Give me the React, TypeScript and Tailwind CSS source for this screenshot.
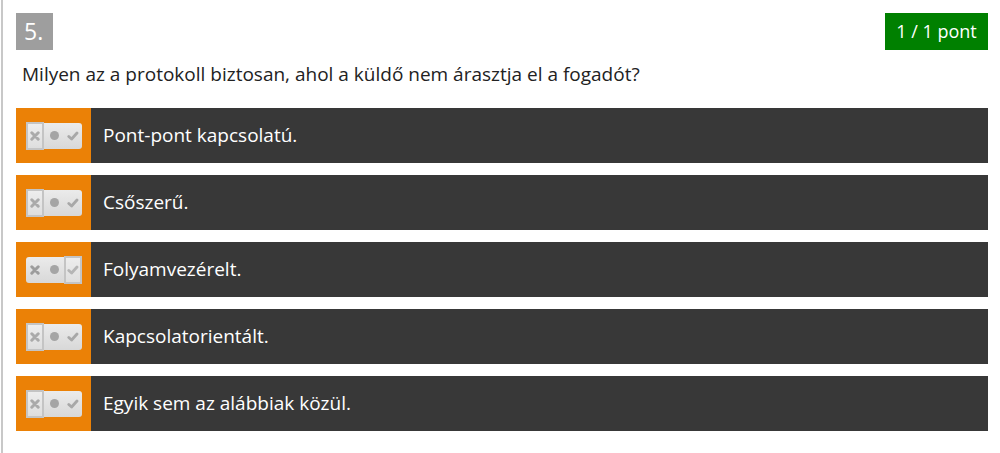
import React from "react";

type Answer = { text: string; state: "no" | "yes" };

const answers: Answer[] = [
  { text: "Pont-pont kapcsolatú.", state: "no" },
  { text: "Csőszerű.", state: "no" },
  { text: "Folyamvezérelt.", state: "yes" },
  { text: "Kapcsolatorientált.", state: "no" },
  { text: "Egyik sem az alábbiak közül.", state: "no" },
];

function Toggle({ state }: { state: "no" | "yes" }) {
  return (
    <div className="relative flex items-center w-[56px] h-[26px] rounded-[3px] bg-gradient-to-b from-[#ebebeb] to-[#d8d8d8]">
      {/* cross */}
      <div className="w-[18px] flex justify-center">
        <svg width="10" height="10" viewBox="0 0 10 10">
          <path d="M1.8 1.8 L8.2 8.2 M8.2 1.8 L1.8 8.2" stroke="#9c9c9c" strokeWidth="3" strokeLinecap="round" />
        </svg>
      </div>
      {/* dot */}
      <div className="w-[20px] flex justify-center">
        <span className="block w-[9px] h-[9px] rounded-full bg-[#a5a5a5]" />
      </div>
      {/* check */}
      <div className="w-[18px] flex justify-center">
        <svg width="12" height="10" viewBox="0 0 12 10">
          <path d="M1.8 5.5 L4.6 8 L10 2" stroke="#a8a8a8" strokeWidth="2.8" fill="none" strokeLinecap="round" strokeLinejoin="round" />
        </svg>
      </div>
      {state === "no" ? (
        <span className="absolute left-0 top-[-1px] w-[18px] h-[28px] border-2 border-[#c4c4c4] bg-white/15" />
      ) : (
        <span className="absolute right-0 top-[-1px] w-[18px] h-[28px] border-2 border-[#c4c4c4] bg-white/15" />
      )}
    </div>
  );
}

export default function App() {
  return (
    <div className="w-[1000px] h-[453px] bg-white font-['Open_Sans',sans-serif]">
      <div className="h-full ml-[1px] border-l-2 border-[#c8c8c8] pl-[12px] pr-[12px] pt-[13px]">
        <div className="flex justify-between items-start pl-[1px]">
          <div className="w-[37px] h-[37px] bg-[#9e9e9e] text-white text-[23px] leading-[37px] pl-[8px]">5.</div>
          <div className="h-[37px] w-[103px] flex items-center justify-center bg-[#008000] text-white text-[18px] leading-[37px]">1 / 1 pont</div>
        </div>
        <p className="mt-[11px] ml-[7px] text-[19px] leading-[26px] text-[#222]">
          Milyen az a protokoll biztosan, ahol a küldő nem árasztja el a fogadót?
        </p>
        <div className="mt-[21px] ml-[1px] flex flex-col gap-[12px]">
          {answers.map((a) => (
            <div key={a.text} className="flex h-[55px] bg-[#383838]">
              <div className="w-[75px] bg-[#eb8106] flex items-center pl-[10px]">
                <Toggle state={a.state} />
              </div>
              <div className="flex items-center pl-[12px] text-white text-[19px]">{a.text}</div>
            </div>
          ))}
        </div>
      </div>
    </div>
  );
}
